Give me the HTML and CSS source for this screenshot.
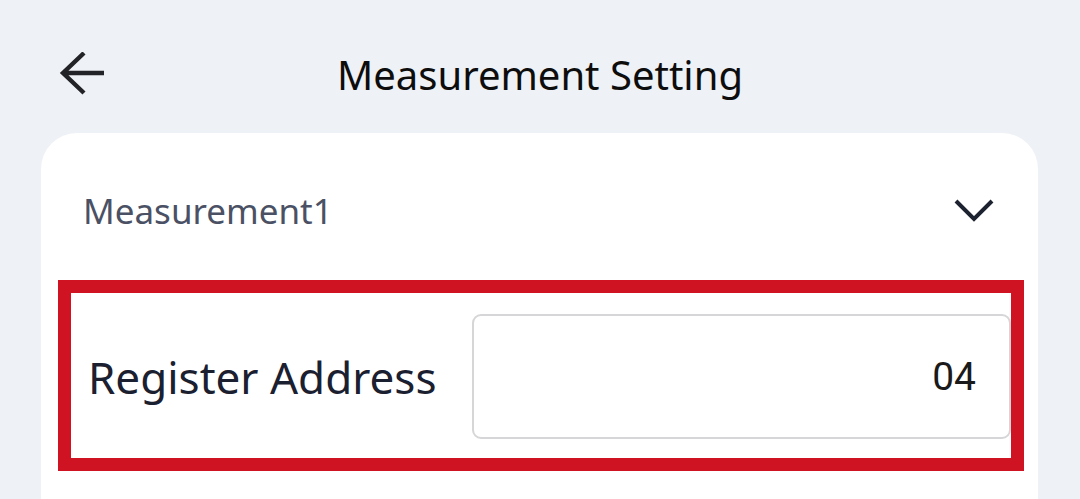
FILE: index.html
```html
<!DOCTYPE html>
<html>
<head>
<meta charset="utf-8">
<link rel="stylesheet" href="styles.css">
</head>
<body>
<div class="page">
  <header class="topbar">
    <svg class="back" width="48" height="48" viewBox="0 0 48 48">
      <path d="M45 21H4M25 1L4 21L25 41" fill="none" stroke="#222327" stroke-width="4.4" stroke-linecap="butt" stroke-linejoin="miter"/>
    </svg>
    <h1 class="title">Measurement Setting</h1>
  </header>
  <section class="card">
    <div class="group-row">
      <span class="group-name">Measurement1</span>
      <svg class="chevron" width="40" height="24" viewBox="0 0 40 24">
        <path d="M2 2L20 20L38 2" fill="none" stroke="#1d2231" stroke-width="4"/>
      </svg>
    </div>
    <div class="highlight">
      <div class="field">
        <span class="field-label">Register Address</span>
        <div class="field-input">04</div>
      </div>
    </div>
  </section>
</div>
</body>
</html>
```
FILE: styles.css
```css
* { box-sizing: border-box; }
html, body {
  margin: 0;
  padding: 0;
  background: #eef1f5;
  width: 1080px;
  height: 499px;
  overflow: hidden;
  font-family: "Noto Sans", sans-serif;
}
.page {
  display: flex;
  flex-direction: column;
}
.topbar {
  height: 133px;
  padding-top: 16px;
  display: flex;
  align-items: center;
  justify-content: center;
  position: relative;
}
.back {
  position: absolute;
  left: 59px;
  top: 52px;
}
.title {
  margin: 0;
  font-size: 40px;
  font-weight: 400;
  color: #0d0d0d;
}
.card {
  margin: 0 42px 0 41px;
  background: #fff;
  border-radius: 36px 36px 0 0;
  height: 366px;
  display: flex;
  flex-direction: column;
}
.group-row {
  margin-top: 37px;
  height: 80px;
  padding: 0 44px 0 42px;
  display: flex;
  align-items: center;
  justify-content: space-between;
}
.group-name {
  font-size: 35px;
  color: #4b5164;
}
.chevron {
  display: block;
  margin-top: 2px;
}
.highlight {
  margin: 30px 14px 0 17px;
  border: 13px solid #cf1322;
  padding: 21px 0 19px 17px;
}
.field {
  display: flex;
  align-items: center;
  justify-content: space-between;
}
.field-label {
  font-size: 44px;
  color: #1b2030;
}
.field-input {
  width: 539px;
  height: 125px;
  border: 2px solid #d6d6d8;
  border-radius: 9px;
  display: flex;
  align-items: center;
  justify-content: flex-end;
  padding-right: 33px;
  font-family: "Roboto", "Noto Sans", sans-serif;
  font-size: 39px;
  color: #1a1a1a;
}
```
